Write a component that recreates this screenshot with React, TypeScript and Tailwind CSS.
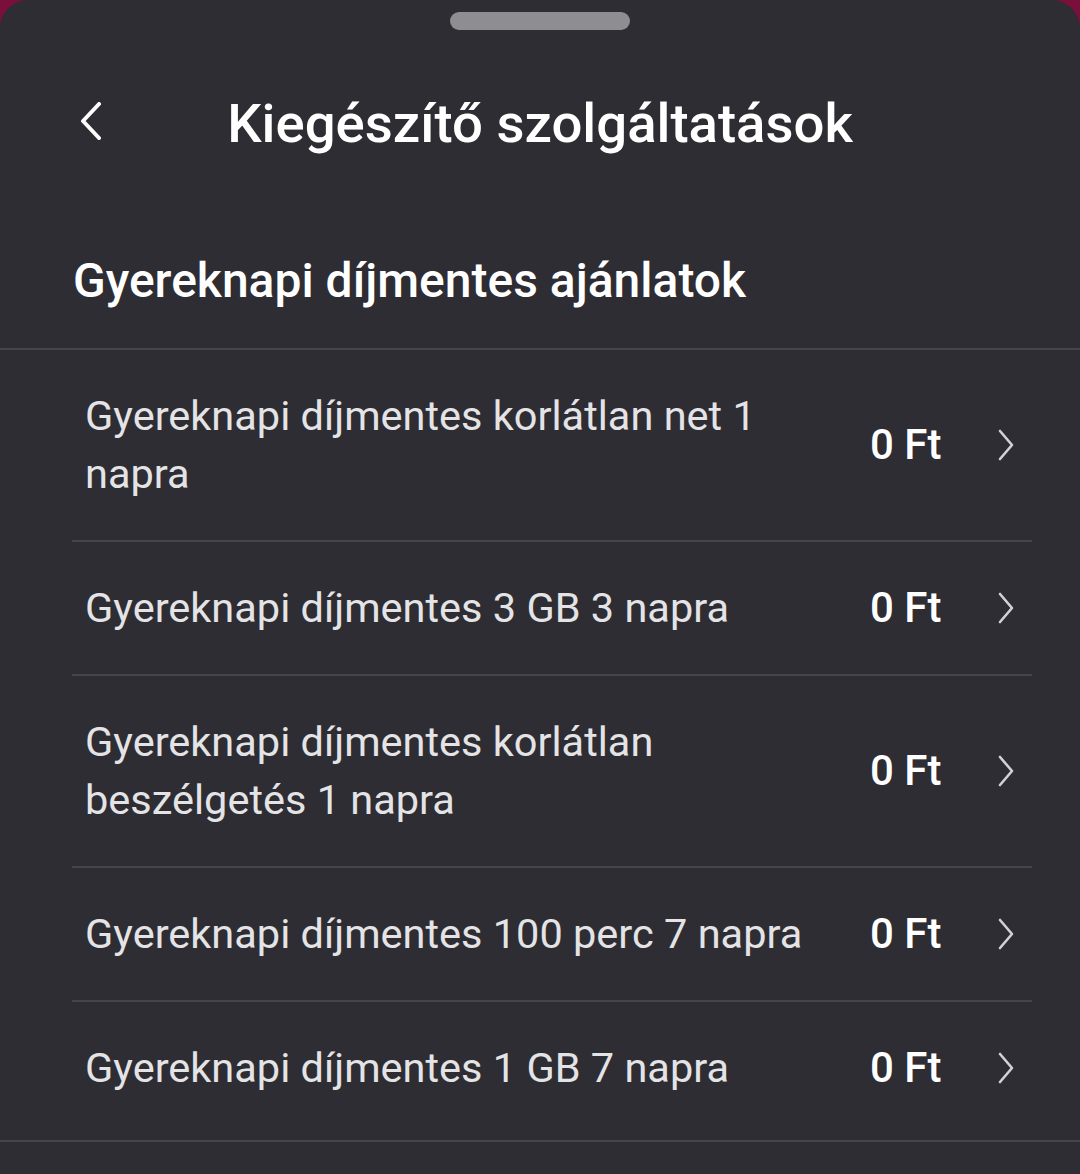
const offers = [
  "Gyereknapi díjmentes korlátlan net 1 napra",
  "Gyereknapi díjmentes 3 GB 3 napra",
  "Gyereknapi díjmentes korlátlan beszélgetés 1 napra",
  "Gyereknapi díjmentes 100 perc 7 napra",
  "Gyereknapi díjmentes 1 GB 7 napra",
];

export default function App() {
  return (
    <div className="w-[1080px] h-[1174px] bg-[#7a0f3c] overflow-hidden font-['Roboto',sans-serif]">
      <div className="h-full bg-[#2e2d33] rounded-t-[28px] flex flex-col">
        <div className="flex justify-center pt-3 h-[30px]">
          <div className="w-[180px] h-[18px] rounded-full bg-[#8e8d92]" />
        </div>

        <header className="relative h-[186px] flex items-center justify-center">
          <button className="absolute left-[80px] top-[72px]">
            <svg width="22" height="38" viewBox="0 0 22 38" fill="none">
              <polyline points="19,2 3,19 19,36" stroke="white" strokeWidth="4" strokeLinecap="round" strokeLinejoin="round" />
            </svg>
          </button>
          <h1 className="text-[54.5px] leading-[64px] font-medium text-white">
            Kiegészítő szolgáltatások
          </h1>
        </header>

        <h2 className="px-[73px] text-[48px] font-medium text-white leading-[58px] pt-[36px] pb-[38px]">
          Gyereknapi díjmentes ajánlatok
        </h2>

        <div className="border-t-2 border-[#45444a]">
          <ul className="pl-[72px] pr-[48px]">
            {offers.map((title, i) => (
              <li
                key={i}
                className="flex items-center border-b-2 border-[#45444a] py-[37px] last:border-b-0 last:pb-[43px]"
              >
                <span className="flex-1 pl-[13px] pr-[50px] text-[41.5px] leading-[58px] text-[#e4e4e6]">
                  {title}
                </span>
                <span className="text-[42px] leading-[58px] font-medium text-white w-[70px] whitespace-nowrap">0 Ft</span>
                <svg className="ml-[58px] mr-[18px]" width="16" height="32" viewBox="0 0 16 32" fill="none">
                  <polyline points="2,2 14,16 2,30" stroke="#d2d2d6" strokeWidth="2.6" strokeLinecap="round" strokeLinejoin="round" />
                </svg>
              </li>
            ))}
          </ul>
        </div>
        <div className="border-t-2 border-[#45444a]" />
      </div>
    </div>
  );
}
